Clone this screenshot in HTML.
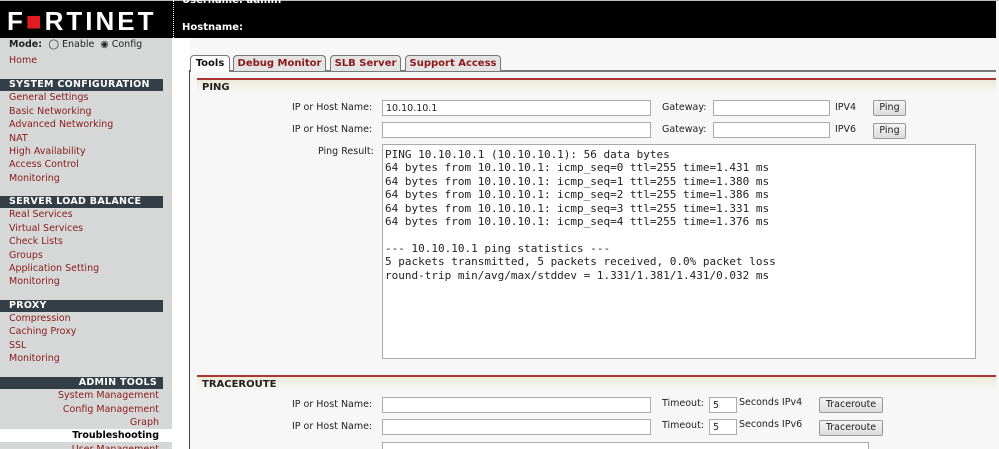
<!DOCTYPE html>
<html style="width:999px;height:449px;overflow:hidden"><head><style>
*{margin:0;padding:0;box-sizing:border-box}
body{width:999px;height:449px;overflow:hidden;background:#f7f7f7;font-family:"DejaVu Sans","Liberation Sans",sans-serif;font-size:9.5px;color:#222;position:relative}
.a{position:absolute;white-space:nowrap}
#hdr{left:0;top:1px;width:996px;height:37px;background:#000}
#side{left:0;top:38px;width:172px;height:411px;background:#d6d8d8}
.sh{position:absolute;left:0;width:163px;height:12px;background:#333e47;color:#fff;font-weight:bold;font-size:9.5px;line-height:12px;padding-left:9px;letter-spacing:.3px}
.l{position:absolute;left:9px;color:#8b1a1a;font-size:9.5px;line-height:12px}
.r{position:absolute;right:840px;color:#8b1a1a;font-size:9.5px;line-height:12px;text-align:right;white-space:nowrap}
.lab{position:absolute;font-size:9.5px;color:#222;line-height:14px;white-space:nowrap}
.in{position:absolute;background:#fff;border:1px solid #aaa;height:16px;font-size:9.5px;padding:2px 3px;line-height:11px}
.btn{position:absolute;background:linear-gradient(#f4f4f4,#dcdcdc);border:1px solid #999;border-radius:2px;height:16px;font-size:9.5px;text-align:center;line-height:14px}
.sec{position:absolute;left:197px;width:799px;height:16px;border-top:2px solid #a33;background:linear-gradient(#ecebd9,#f7f7f7);font-weight:bold;font-size:10px;padding-left:5px;line-height:15px}
.tab{position:absolute;top:55px;height:16px;border:1px solid #777;border-bottom:none;border-radius:4px 4px 0 0;background:#e4e4e4;color:#8b1a1a;font-weight:bold;font-size:10px;text-align:center;line-height:16px}
pre{font-family:"DejaVu Sans Mono","Liberation Mono",monospace;font-size:11px;line-height:13.4px}
</style></head><body>
<div class="a" style="left:0;top:0;width:999px;height:1px;background:#bbb"></div>
<div class="a" id="hdr"></div>
<div class="a" style="left:7px;top:6px;color:#fff;font:bold 26px 'Liberation Sans',sans-serif;letter-spacing:3px">F<span style="color:#e21b22">■</span>RTINET</div>
<div class="a" style="left:173px;top:0;width:0;height:38px;border-left:1px dotted #fff"></div>
<div class="a" style="left:182px;top:-5px;color:#fff;font-weight:bold;font-size:10px">Username: admin</div>
<div class="a" style="left:182px;top:22px;color:#fff;font-weight:bold;font-size:10px">Hostname:</div>
<div class="a" id="side"></div>
<div class="a" style="left:172px;top:38px;width:18px;height:411px;background:#fff"></div>
<div class="a" style="left:0;top:429px;width:172px;height:13px;background:#fff"></div>
<div class="a" style="left:9px;top:39px;font-weight:bold;font-size:9.5px;color:#222">Mode: <span style="font-weight:normal">&nbsp;◯ Enable &nbsp;◉ Config</span></div>
<div class="l" style="top:55px">Home</div>
<div class="sh" style="top:79px">SYSTEM CONFIGURATION</div>
<div class="l" style="top:92px">General Settings</div>
<div class="l" style="top:106px">Basic Networking</div>
<div class="l" style="top:119px">Advanced Networking</div>
<div class="l" style="top:133px">NAT</div>
<div class="l" style="top:146px">High Availability</div>
<div class="l" style="top:159px">Access Control</div>
<div class="l" style="top:173px">Monitoring</div>
<div class="sh" style="top:196px">SERVER LOAD BALANCE</div>
<div class="l" style="top:209px">Real Services</div>
<div class="l" style="top:223px">Virtual Services</div>
<div class="l" style="top:236px">Check Lists</div>
<div class="l" style="top:250px">Groups</div>
<div class="l" style="top:263px">Application Setting</div>
<div class="l" style="top:276px">Monitoring</div>
<div class="sh" style="top:300px">PROXY</div>
<div class="l" style="top:313px">Compression</div>
<div class="l" style="top:326px">Caching Proxy</div>
<div class="l" style="top:340px">SSL</div>
<div class="l" style="top:353px">Monitoring</div>
<div class="sh" style="top:377px;text-align:right;padding-right:6px">ADMIN TOOLS</div>
<div class="r" style="top:390px">System Management</div>
<div class="r" style="top:404px">Config Management</div>
<div class="r" style="top:417px">Graph</div>
<div class="r" style="top:430px;color:#000;font-weight:bold">Troubleshooting</div>
<div class="r" style="top:444px">User Management</div>

<div class="a" style="left:190px;top:70px;width:806px;height:2px;background:#777"></div>
<div class="a" style="left:189px;top:70px;width:1px;height:379px;background:#444"></div>
<div class="tab" style="left:190px;width:40px;background:#fff;color:#111;height:17px">Tools</div>
<div class="tab" style="left:233px;width:93px">Debug Monitor</div>
<div class="tab" style="left:330px;width:71px">SLB Server</div>
<div class="tab" style="left:405px;width:96px">Support Access</div>

<div class="sec" style="top:78px">PING</div>
<div class="lab" style="left:292px;top:101px">IP or Host Name:</div>
<div class="in" style="left:382px;top:100px;width:269px">10.10.10.1</div>
<div class="lab" style="left:662px;top:101px">Gateway:</div>
<div class="in" style="left:713px;top:100px;width:117px"></div>
<div class="lab" style="left:835px;top:101px">IPV4</div>
<div class="btn" style="left:873px;top:100px;width:33px">Ping</div>
<div class="lab" style="left:292px;top:123px">IP or Host Name:</div>
<div class="in" style="left:382px;top:122px;width:269px"></div>
<div class="lab" style="left:662px;top:123px">Gateway:</div>
<div class="in" style="left:713px;top:122px;width:117px"></div>
<div class="lab" style="left:835px;top:123px">IPV6</div>
<div class="btn" style="left:873px;top:123px;width:33px">Ping</div>
<div class="lab" style="left:318px;top:145px">Ping Result:</div>
<div class="a" style="left:382px;top:144px;width:594px;height:215px;background:#fff;border:1px solid #aaa;padding:3px 2px"><pre>PING 10.10.10.1 (10.10.10.1): 56 data bytes
64 bytes from 10.10.10.1: icmp_seq=0 ttl=255 time=1.431 ms
64 bytes from 10.10.10.1: icmp_seq=1 ttl=255 time=1.380 ms
64 bytes from 10.10.10.1: icmp_seq=2 ttl=255 time=1.386 ms
64 bytes from 10.10.10.1: icmp_seq=3 ttl=255 time=1.331 ms
64 bytes from 10.10.10.1: icmp_seq=4 ttl=255 time=1.376 ms

--- 10.10.10.1 ping statistics ---
5 packets transmitted, 5 packets received, 0.0% packet loss
round-trip min/avg/max/stddev = 1.331/1.381/1.431/0.032 ms</pre></div>

<div class="sec" style="top:375px">TRACEROUTE</div>
<div class="lab" style="left:292px;top:398px">IP or Host Name:</div>
<div class="in" style="left:382px;top:397px;width:269px"></div>
<div class="lab" style="left:662px;top:397px">Timeout:</div>
<div class="in" style="left:709px;top:397px;width:28px">5</div>
<div class="lab" style="left:739px;top:396px">Seconds IPv4</div>
<div class="btn" style="left:819px;top:397px;width:64px">Traceroute</div>
<div class="lab" style="left:292px;top:420px">IP or Host Name:</div>
<div class="in" style="left:382px;top:419px;width:269px"></div>
<div class="lab" style="left:662px;top:419px">Timeout:</div>
<div class="in" style="left:709px;top:419px;width:28px">5</div>
<div class="lab" style="left:739px;top:418px">Seconds IPv6</div>
<div class="btn" style="left:819px;top:420px;width:64px">Traceroute</div>
<div class="in" style="left:382px;top:442px;width:487px"></div>
</body></html>
